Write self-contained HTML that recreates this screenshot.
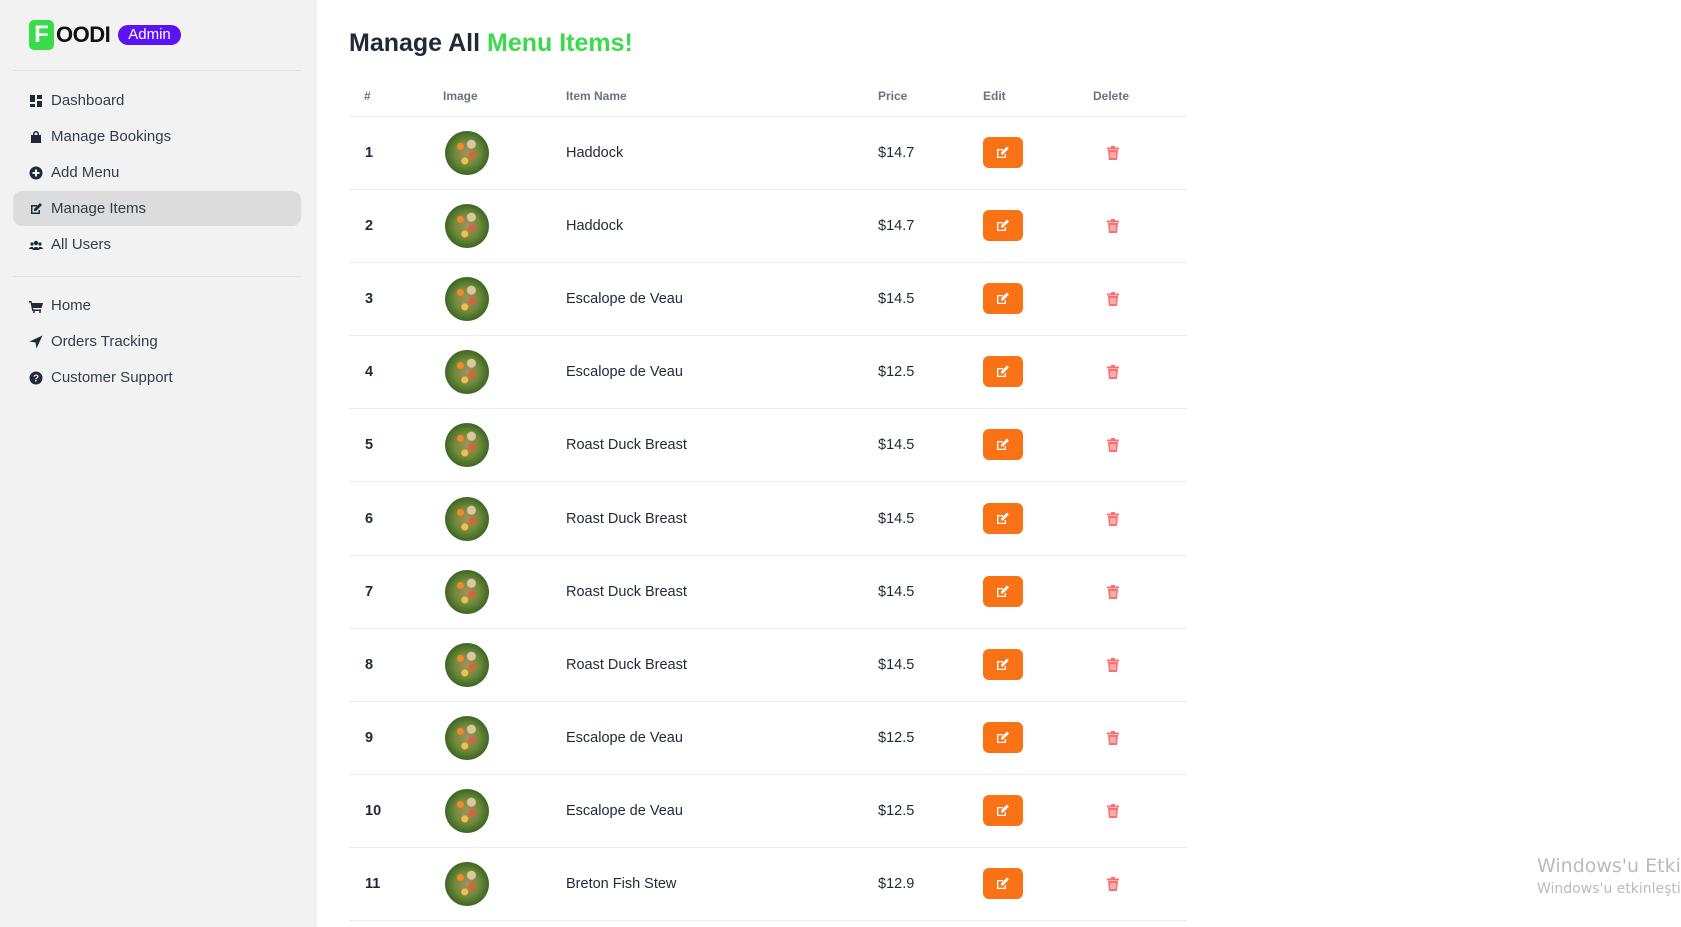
<!DOCTYPE html>
<html><head><meta charset="utf-8"><style>
*{margin:0;padding:0;box-sizing:border-box}
body{width:1681px;height:927px;overflow:hidden;background:#fff;font-family:"Liberation Sans",sans-serif;position:relative}
.side{position:absolute;left:0;top:0;width:317px;height:927px;background:#f2f2f2}
.logo{position:absolute;left:29px;top:20px;display:flex;align-items:center}
.f{width:25px;height:30px;background:#39db4a;border-radius:5px;color:#fff;font-weight:bold;font-size:24px;text-align:center;line-height:30px}
.oodi{font-weight:900;font-size:22px;margin-left:2px;letter-spacing:-0.5px;color:#111}
.adm{margin-left:8px;background:#5b12f5;color:#fff;border-radius:12px;font-size:15px;padding:2px 10px;line-height:16px}
.hr{position:absolute;left:13px;width:288px;height:1px;background:#e2e2e2}
.nav{position:absolute;left:13px;width:288px;height:35px;display:flex;align-items:center;font-size:15px;color:#333d4a}
.nav.act{background:#dcdcdd;border-radius:9px}
.nav svg{width:14px;height:14px;margin-left:16px;margin-right:8px;fill:#1f2937}
h1{position:absolute;left:349px;top:29px;font-size:25px;font-weight:600;color:#1f2937}
h1 span{color:#39db4a}
.th{position:absolute;top:89px;font-size:12px;font-weight:bold;color:#6b7280}
.line{position:absolute;left:349px;width:838px;height:1px;background:#ececec}
.c{position:absolute;font-size:14.5px;color:#1f2937}
.n{font-weight:bold}
.img{position:absolute;width:44px;height:44px;border-radius:50%;left:445px;background:
radial-gradient(circle at 35% 35%,#f08a2c 0 3px,transparent 4px),
radial-gradient(circle at 62% 55%,#e0603a 0 3px,transparent 4px),
radial-gradient(circle at 45% 68%,#f2c04a 0 3px,transparent 4px),
radial-gradient(circle at 60% 30%,#d9c8a0 0 4px,transparent 5px),
radial-gradient(circle at 50% 50%,#a89060 0,#6f8a3a 40%,#2f5a1e 80%,#d8d8d8 97%)}
.ed{position:absolute;left:983px;width:40px;height:31px;background:#f97316;border-radius:6px}
.ed svg{position:absolute;left:13px;top:9px;width:14px;height:13px}
.del{position:absolute;left:1107px;width:12px;height:14px}
.wm{position:absolute;left:1537px;color:#bbb;font-family:"DejaVu Sans",sans-serif;white-space:nowrap}
</style></head><body>
<div class="side">
<div class="logo"><div class="f">F</div><div class="oodi">OODI</div><div class="adm">Admin</div></div>
<div class="hr" style="top:70px"></div>
<div class="nav" style="top:83px"><svg viewBox="0 0 14 14"><rect x="1" y="1" width="5" height="7"/><rect x="8" y="1" width="5" height="4"/><rect x="1" y="10" width="5" height="3"/><rect x="8" y="7" width="5" height="6"/></svg>Dashboard</div>
<div class="nav" style="top:119px"><svg viewBox="0 0 14 14"><path d="M4 5V4a3 3 0 016 0v1h2v8H2V5zM5.5 5h3V4a1.5 1.5 0 00-3 0z"/></svg>Manage Bookings</div>
<div class="nav" style="top:155px"><svg viewBox="0 0 14 14"><circle cx="7" cy="7" r="6.5"/><path d="M6 3.5h2v2.5h2.5v2H8v2.5H6V8H3.5V6H6z" fill="#f2f2f2"/></svg>Add Menu</div>
<div class="nav act" style="top:191px"><svg viewBox="0 0 14 14"><path d="M2 3h6v1.5H3.5v6h6V8H11v4H2z"/><path d="M11 1l2 2-6 6H5V7z"/></svg>Manage Items</div>
<div class="nav" style="top:227px"><svg viewBox="0 0 14 14"><circle cx="7" cy="5" r="2.2"/><circle cx="3" cy="6" r="1.6"/><circle cx="11" cy="6" r="1.6"/><path d="M3.5 12a3.5 3 0 017 0zM0 11a3 2.5 0 014 -2v2zM14 11a3 2.5 0 00-4-2v2z"/></svg>All Users</div>
<div class="hr" style="top:276px"></div>
<div class="nav" style="top:288px"><svg viewBox="0 0 14 14"><path d="M0 2h2.5l.5 2h11l-1.5 5H4l.4 1.5H12V12H3.2L1.5 3.5H0z"/><circle cx="5" cy="13" r="1"/><circle cx="11" cy="13" r="1"/></svg>Home</div>
<div class="nav" style="top:324px"><svg viewBox="0 0 14 14"><path d="M13.5.5L.5 6.5l6 1 1 6z"/></svg>Orders Tracking</div>
<div class="nav" style="top:360px"><svg viewBox="0 0 14 14"><circle cx="7" cy="7" r="6.5"/><text x="7" y="10.5" font-size="10" font-weight="bold" text-anchor="middle" fill="#f2f2f2" font-family="Liberation Sans">?</text></svg>Customer Support</div>
</div>
<h1>Manage All <span>Menu Items!</span></h1>
<div class="th" style="left:364px">#</div>
<div class="th" style="left:443px">Image</div>
<div class="th" style="left:566px">Item Name</div>
<div class="th" style="left:878px">Price</div>
<div class="th" style="left:983px">Edit</div>
<div class="th" style="left:1093px">Delete</div>
<div class="line" style="top:116px"></div>
<div id="rows"></div>
<script>
var d=[["1","Haddock","$14.7"],["2","Haddock","$14.7"],["3","Escalope de Veau","$14.5"],["4","Escalope de Veau","$12.5"],["5","Roast Duck Breast","$14.5"],["6","Roast Duck Breast","$14.5"],["7","Roast Duck Breast","$14.5"],["8","Roast Duck Breast","$14.5"],["9","Escalope de Veau","$12.5"],["10","Escalope de Veau","$12.5"],["11","Breton Fish Stew","$12.9"]];
var h="";d.forEach(function(r,i){var cy=153+i*73.1;
h+='<div class="c n" style="left:365px;top:'+(cy-8)+'px">'+r[0]+'</div>';
h+='<div class="img" style="top:'+(cy-22)+'px"></div>';
h+='<div class="c" style="left:566px;top:'+(cy-8)+'px">'+r[1]+'</div>';
h+='<div class="c" style="left:878px;top:'+(cy-8)+'px">'+r[2]+'</div>';
h+='<div class="ed" style="top:'+(cy-16)+'px"><svg viewBox="0 0 14 13"><path d="M1 3h6v1.3H2.3v6.4h6.4V8H10v4H1z" fill="#fff"/><path d="M11 .5l2 2-6 6H5v-2z" fill="#fff"/></svg></div>';
h+='<svg class="del" style="top:'+(cy-7)+'px" viewBox="0 0 12 14"><rect x="0" y="1.5" width="12" height="2" fill="#f87171"/><rect x="4" y="0" width="4" height="2" fill="#f87171"/><path d="M1 4h10l-1 10H2z" fill="#f87171"/><path d="M4 6v6M6 6v6M8 6v6" stroke="#fff" stroke-width=".8"/></svg>';
h+='<div class="line" style="top:'+(cy+36)+'px"></div>';});
document.getElementById("rows").innerHTML=h;
</script>
<div class="wm" style="top:855px;font-size:19px">Windows'u Etkinleştir</div>
<div class="wm" style="top:881px;font-size:14px">Windows'u etkinleştirmek için</div>
</body></html>
